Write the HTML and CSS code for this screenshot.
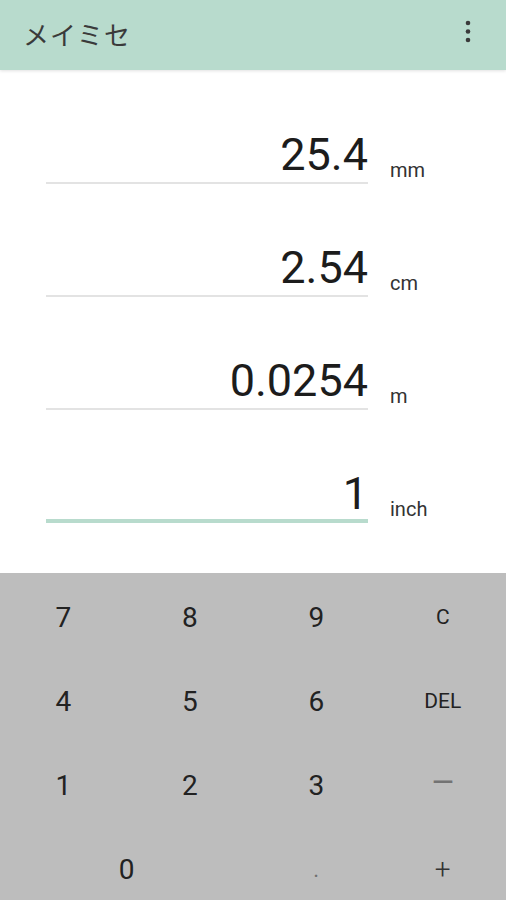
FILE: index.html
```html
<!DOCTYPE html>
<html>
<head>
  <title>メイミセ</title>
  <meta http-equiv="Content-Type" content="text/html; charset=utf-8">
  <link rel="stylesheet" href="styles.css">
</head>
<body>
<div class="app">
  <div class="appbar">
    <span class="title">メイミセ</span>
    <svg class="menu" width="8" height="24" viewBox="0 0 8 24">
      <circle cx="4" cy="3" r="2.3" fill="#3a3a3a"/>
      <circle cx="4" cy="11.5" r="2.3" fill="#3a3a3a"/>
      <circle cx="4" cy="20" r="2.3" fill="#3a3a3a"/>
    </svg>
  </div>

  <div class="fields">
    <div class="row">
      <div class="field">25.4</div>
      <div class="unit">mm</div>
    </div>
    <div class="row">
      <div class="field">2.54</div>
      <div class="unit">cm</div>
    </div>
    <div class="row">
      <div class="field">0.0254</div>
      <div class="unit">m</div>
    </div>
    <div class="row">
      <div class="field active">1</div>
      <div class="unit">inch</div>
    </div>
  </div>

  <div class="keypad">
    <div class="key">7</div>
    <div class="key">8</div>
    <div class="key">9</div>
    <div class="key small">C</div>
    <div class="key">4</div>
    <div class="key">5</div>
    <div class="key">6</div>
    <div class="key small">DEL</div>
    <div class="key">1</div>
    <div class="key">2</div>
    <div class="key">3</div>
    <div class="key minus">—</div>
    <div class="key wide">0</div>
    <div class="key dot">.</div>
    <div class="key plus">+</div>
  </div>
</div>
</body>
</html>
```

FILE: styles.css
```css
html, body {
  margin: 0;
  padding: 0;
  background: #ffffff;
}

.app {
  width: 506px;
  height: 900px;
  overflow: hidden;
  display: flex;
  flex-direction: column;
  font-family: Roboto, "Noto Sans", sans-serif;
}

.appbar {
  height: 70px;
  flex: none;
  background: #b8dbcd;
  display: flex;
  align-items: center;
  justify-content: space-between;
  padding: 0 34px 0 23px;
  box-shadow: 0 1px 3px rgba(0, 0, 0, 0.12);
  position: relative;
  z-index: 1;
}

.title {
  font-family: "Noto Sans CJK JP", sans-serif;
  font-size: 26px;
  color: #3a3a3a;
  letter-spacing: 1px;
  margin-top: -4px;
}

.menu {
  margin-top: -6px;
}

.fields {
  flex: 1;
  display: flex;
  flex-direction: column;
  gap: 59px;
  padding-top: 60px;
}

.row {
  display: flex;
  align-items: flex-end;
  padding-left: 46px;
}

.field {
  width: 322px;
  text-align: right;
  font-size: 45px;
  line-height: 50px;
  color: #1c1c1c;
  padding-bottom: 2px;
  border-bottom: 2px solid #e3e3e3;
}

.field.active {
  padding-bottom: 0;
  border-bottom: 4px solid #b8dbcd;
}

.unit {
  margin-left: 22px;
  font-size: 20px;
  line-height: 20px;
  padding-bottom: 4px;
  color: #333333;
}

.keypad {
  flex: none;
  box-sizing: border-box;
  height: 327px;
  background: #bdbdbd;
  display: grid;
  grid-template-columns: repeat(4, 1fr);
  grid-auto-rows: 84px;
  padding-top: 2px;
}

.key {
  display: flex;
  align-items: center;
  justify-content: center;
  font-size: 28px;
  color: #222222;
}

.key.small {
  font-size: 21px;
}

.key.minus {
  color: #737373;
  font-size: 28px;
  font-weight: 500;
  padding-bottom: 6px;
}

.key.dot {
  color: #707070;
  font-size: 22px;
}

.key.plus {
  color: #333333;
  font-size: 28px;
  font-weight: 300;
}

.key.wide {
  grid-column: span 2;
}
```
